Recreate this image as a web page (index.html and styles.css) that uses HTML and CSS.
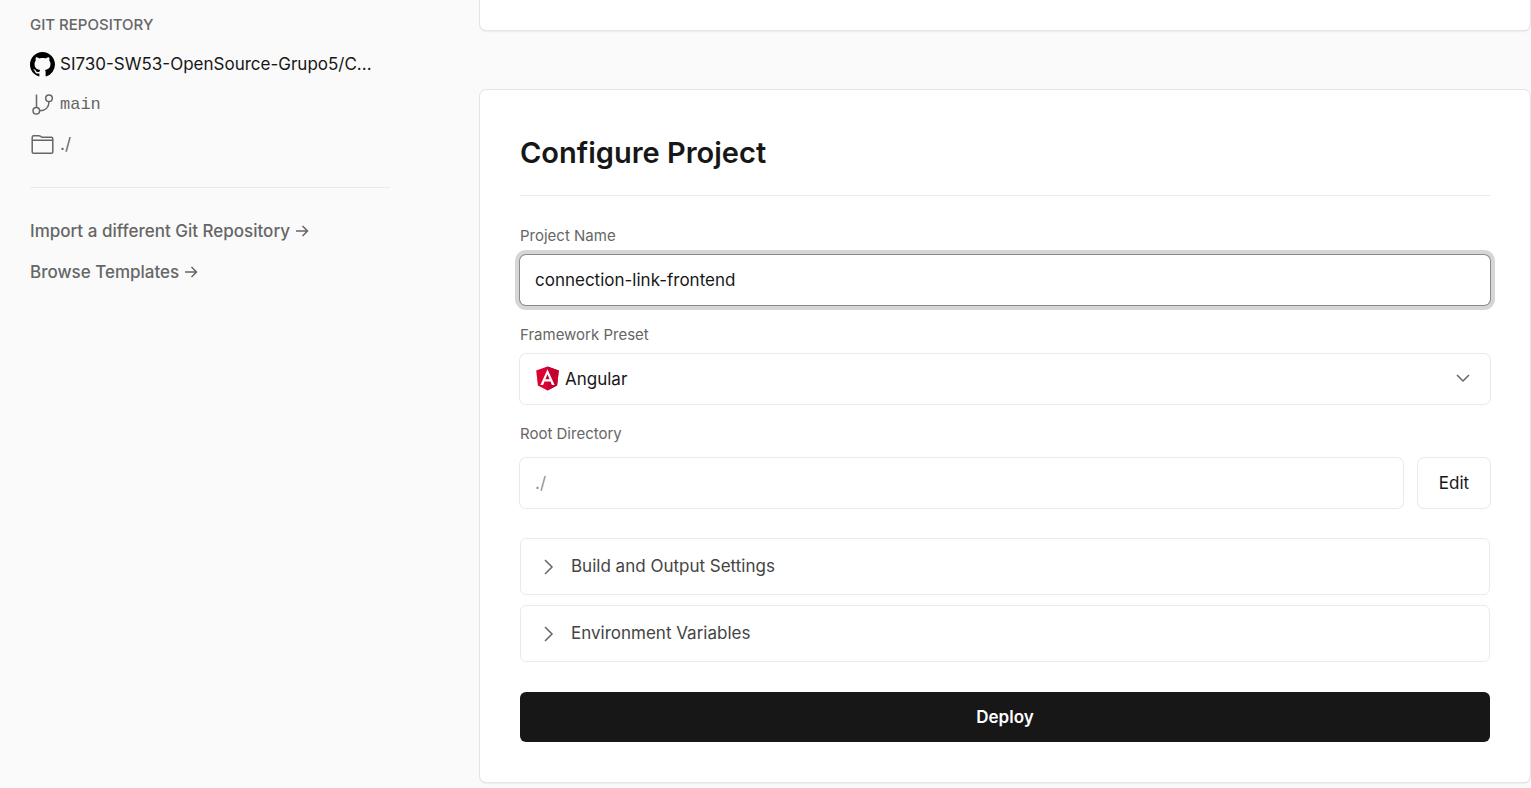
FILE: index.html
```html
<!DOCTYPE html>
<html lang="en">
<head>
<meta charset="utf-8">
<meta name="viewport" content="width=device-width, initial-scale=1">
<title>Configure Project</title>
<link rel="stylesheet" href="styles.css">
</head>
<body>
<div class="page">
  <aside class="sidebar">
    <h2 class="sidebar-title">GIT REPOSITORY</h2>
    <ul class="repo">
      <li class="repo-row repo-name">
        <svg class="icon" viewBox="0 0 16 16" fill="#000" aria-hidden="true"><path d="M8 0C3.58 0 0 3.58 0 8c0 3.54 2.29 6.53 5.47 7.59.4.07.55-.17.55-.38 0-.19-.01-.82-.01-1.49-2.01.37-2.53-.49-2.69-.94-.09-.23-.48-.94-.82-1.13-.28-.15-.68-.52-.01-.53.63-.01 1.08.58 1.23.82.72 1.21 1.87.87 2.33.66.07-.52.28-.87.51-1.07-1.78-.2-3.64-.89-3.64-3.95 0-.87.31-1.59.82-2.15-.08-.2-.36-1.02.08-2.12 0 0 .67-.21 2.2.82.64-.18 1.32-.27 2-.27s1.36.09 2 .27c1.53-1.04 2.2-.82 2.2-.82.44 1.1.16 1.92.08 2.12.51.56.82 1.27.82 2.15 0 3.07-1.87 3.75-3.65 3.95.29.25.54.73.54 1.48 0 1.07-.01 1.93-.01 2.2 0 .21.15.46.55.38A8.01 8.01 0 0 0 16 8c0-4.42-3.58-8-8-8z"/></svg>
        <span class="repo-text">SI730-SW53-OpenSource-Grupo5/C...</span>
      </li>
      <li class="repo-row repo-branch">
        <svg class="icon line" viewBox="0 0 25 25" aria-hidden="true"><path d="M6.500 2.500v13M19 9.500c0 5.500-3.500 9.300-9.300 9.300"/><circle cx="6.300" cy="18.700" r="3.300"/><circle cx="19" cy="6.200" r="3.300"/></svg>
        <span class="repo-text">main</span>
      </li>
      <li class="repo-row">
        <svg class="icon line" viewBox="0 0 25 25" aria-hidden="true"><path d="M2.200 20V5.200q0-1.500 1.500-1.500h5.200q.8 0 1.400.5l1 .7q.6.400 1.400.400h8.600q1.500 0 1.500 1.500v13.200q0 1.300-1.300 1.300h-18q-1.300 0-1.300-1.300zM2.200 8.300h20.600"/></svg>
        <span class="repo-text">./</span>
      </li>
    </ul>
    <nav class="links">
      <a class="link" href="#import">Import a different Git Repository
        <svg class="arrow" viewBox="0 0 14 14" aria-hidden="true"><path d="M1 7h11.500M7.500 2l5 5-5 5"/></svg></a>
      <a class="link" href="#templates">Browse Templates
        <svg class="arrow" viewBox="0 0 14 14" aria-hidden="true"><path d="M1 7h11.500M7.500 2l5 5-5 5"/></svg></a>
    </nav>
  </aside>

  <main class="main">
    <section class="card card-previous"></section>
    <section class="card card-configure">
      <h1 class="title">Configure Project</h1>
      <form class="form">
        <div class="field">
          <label class="label" for="name">Project Name</label>
          <input class="control control-active" id="name" type="text" value="connection-link-frontend" spellcheck="false">
        </div>
        <div class="field">
          <label class="label" for="framework">Framework Preset</label>
          <div class="select">
            <select class="control" id="framework"><option>Angular</option></select>
            <svg class="select-logo" viewBox="0 0 250 250" aria-hidden="true"><path fill="#dd0031" d="M125 5 12 45l17 149 96 52 96-52 17-149z"/><path fill="#c3002f" d="M125 5v241l96-52 17-149z"/><path fill="#fff" d="M125 32 54 191h27l14-36h60l14 36h27zm21 101h-42l21-50z"/></svg>
            <svg class="select-chevron" viewBox="0 0 14 14" aria-hidden="true"><path d="m1 4 6 6 6-6"/></svg>
          </div>
        </div>
        <div class="field field-root">
          <label class="label" for="root">Root Directory</label>
          <div class="root-row">
            <input class="control control-muted" id="root" type="text" value="./" readonly>
            <button class="edit" type="button">Edit</button>
          </div>
        </div>
        <div class="sections">
          <details class="section">
            <summary class="summary"><svg class="summary-icon" viewBox="0 0 16 16" aria-hidden="true"><path d="m5 1 7 7-7 7"/></svg>Build and Output Settings</summary>
          </details>
          <details class="section">
            <summary class="summary"><svg class="summary-icon" viewBox="0 0 16 16" aria-hidden="true"><path d="m5 1 7 7-7 7"/></svg>Environment Variables</summary>
          </details>
        </div>
        <button class="deploy" type="button">Deploy</button>
      </form>
    </section>
  </main>
</div>
</body>
</html>
```
FILE: styles.css
```css
* { box-sizing: border-box; }

body {
  margin: 0;
  background: #fafafa;
  color: #171717;
  font-family: Inter, "Liberation Sans", sans-serif;
  font-size: 17px;
}

svg { flex: none; }

.page {
  display: flex;
  gap: 90px;
  padding: 0 1px 6px 30px;
}

/* Sidebar */
.sidebar {
  flex: none;
  width: 360px;
  padding-top: 15px;
  color: #666;
}

.sidebar-title {
  margin: 0 0 18px;
  font-size: 15px;
  line-height: 19px;
  font-weight: 500;
}

.repo {
  display: flex;
  flex-direction: column;
  gap: 15px;
  margin: 0;
  padding: 0 0 30px;
  border-bottom: 1px solid #eaeaea;
  list-style: none;
}

.repo-row {
  display: flex;
  align-items: center;
  gap: 5px;
  line-height: 25px;
}

.repo-text { white-space: nowrap; }

.repo-name { color: #171717; }

.repo-branch { font-family: "Liberation Mono", monospace; }

.icon { width: 25px; height: 25px; }

.line, .arrow, .select-chevron, .summary-icon {
  fill: none;
  stroke: #666;
  stroke-width: 1.5;
}

.links {
  display: flex;
  flex-direction: column;
  align-items: flex-start;
  gap: 15px;
  padding-top: 30px;
}

.link {
  display: flex;
  align-items: center;
  gap: 5px;
  color: #666;
  font-weight: 500;
  line-height: 26px;
  text-decoration: none;
  white-space: nowrap;
}

.arrow { width: 14px; height: 14px; }

/* Cards */
.main { flex: 1; min-width: 0; }

.card {
  background: #fff;
  border-radius: 6px;
  box-shadow: 0 0 0 1px #e4e4e4, 0 2px 2px rgba(0, 0, 0, .06);
}

.card-previous {
  height: 30px;
  margin-bottom: 60px;
  border-radius: 0 0 6px 6px;
}

.card-configure { padding: 40px; }

.title {
  margin: 0 0 30px;
  padding-bottom: 20px;
  border-bottom: 1px solid #eaeaea;
  font-size: 29px;
  line-height: 45px;
  font-weight: 600;
}

/* Form */
.form {
  display: flex;
  flex-direction: column;
  gap: 20px;
}

.field {
  display: flex;
  flex-direction: column;
  gap: 10px;
}

.field-root { gap: 15px; margin-bottom: 10px; }

.label {
  color: #666;
  font-size: 15px;
  line-height: 19px;
}

.control {
  width: 100%;
  height: 50px;
  padding: 0 15px;
  border: 0;
  border-radius: 6px;
  outline: 0;
  background: #fff;
  box-shadow: 0 0 0 1px #eaeaea;
  color: #171717;
  font: inherit;
}

.control-active { box-shadow: 0 0 0 1px #8a8a8a, 0 0 0 5px #d6d6d6; }

.control-muted { color: #8f8f8f; }

.select { position: relative; }

.select .control {
  display: block;
  padding: 0 45px;
  appearance: none;
}

.select-logo {
  position: absolute;
  top: 12px;
  left: 15px;
  width: 25px;
  height: 25px;
}

.select-chevron {
  position: absolute;
  top: 17px;
  right: 20px;
  width: 14px;
  height: 14px;
}

.root-row { display: flex; gap: 15px; }

.edit {
  flex: none;
  width: 72px;
  border: 0;
  border-radius: 6px;
  background: #fff;
  box-shadow: 0 0 0 1px #eaeaea;
  color: #171717;
  font: inherit;
}

.sections {
  display: flex;
  flex-direction: column;
  gap: 10px;
  margin-bottom: 10px;
}

.section {
  border: 1px solid #eaeaea;
  border-radius: 6px;
}

.summary {
  display: flex;
  align-items: center;
  gap: 15px;
  padding: 15px 19px;
  color: #444;
  line-height: 25px;
  list-style: none;
}

.summary-icon { width: 16px; height: 16px; }

.deploy {
  height: 50px;
  border: 0;
  border-radius: 6px;
  background: #171717;
  color: #fff;
  font: inherit;
  font-weight: 600;
}
```
